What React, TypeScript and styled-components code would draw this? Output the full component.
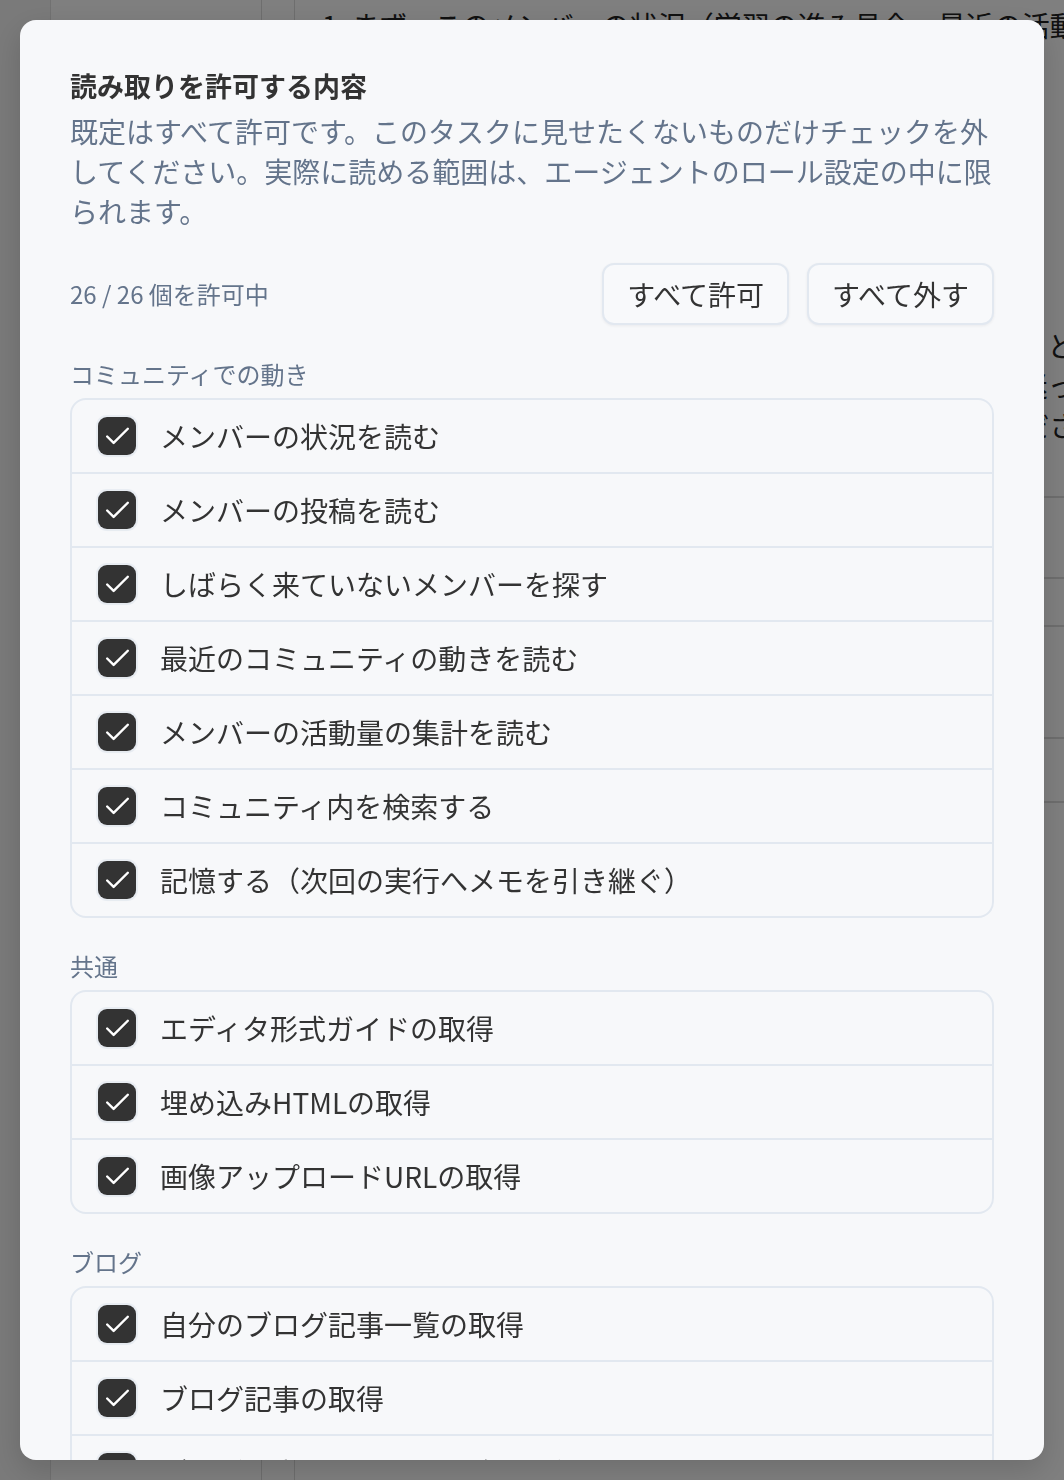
import React, { useState } from "react";
import styled, { createGlobalStyle } from "styled-components";

const GlobalStyle = createGlobalStyle`
  html, body {
    margin: 0;
    padding: 0;
  }
  body {
    font-family: "Noto Sans CJK JP", "Noto Sans", sans-serif;
    color: #333;
    background: #fff;
  }
  * {
    box-sizing: border-box;
  }
`;

/* ---------- page behind the dialog ---------- */

const Page = styled.div`
  display: grid;
  grid-template-columns: 51px 211px 33px 1fr;
  height: 1480px;
  background: #fff;
  overflow: hidden;
`;

const Rail = styled.aside`
  background: #f5f5f5;
  border-right: 1px solid #e2e2e2;
`;

const Sidebar = styled.nav`
  border-right: 1px solid #dcdcdc;
`;

const Gutter = styled.div`
  border-right: 1px solid #dcdcdc;
`;

const Main = styled.main`
  padding: 5px 0 0 27px;
  display: flex;
  flex-direction: column;
  font-size: 28px;
  line-height: 40px;
  color: #222;
  overflow: hidden;
`;

const Lead = styled.p`
  margin: 0;
  white-space: nowrap;
`;

const Paragraph = styled.p`
  margin: 0;
  width: 760px;
`;

const Spacer = styled.div<{ $h: number }>`
  flex: none;
  height: ${(p) => p.$h}px;
`;

const BgRow = styled.div<{ $h: number }>`
  flex: none;
  height: ${(p) => p.$h}px;
  border-bottom: 2px solid #dcdcdc;
  margin-right: -40px;
`;

const BgInput = styled.div`
  flex: none;
  margin-top: 695px;
  width: 306px;
  height: 60px;
  border: 2px solid #d8d8d8;
  border-radius: 14px;
`;

/* ---------- dialog ---------- */

const Overlay = styled.div`
  position: fixed;
  inset: 0;
  background: rgba(0, 0, 0, 0.5);
  display: flex;
  padding: 20px;
`;

const Dialog = styled.section`
  flex: 1;
  background: #f7f8fa;
  border-radius: 16px;
  overflow: hidden;
  box-shadow: 0 10px 30px rgba(0, 0, 0, 0.15);
  padding: 46px 50px;
`;

const Title = styled.h2`
  margin: 0;
  font-size: 27px;
  line-height: 40px;
  font-weight: 700;
  color: #333;
`;

const Description = styled.p`
  margin: 5px 0 0;
  font-size: 28px;
  line-height: 40px;
  color: #64748b;
`;

const Toolbar = styled.div`
  margin-top: 32px;
  padding-bottom: 1px;
  display: flex;
  align-items: flex-start;
  justify-content: space-between;
`;

const Count = styled.span`
  font-size: 24px;
  line-height: 62px;
  color: #64748b;
`;

const Actions = styled.div`
  display: flex;
  gap: 18px;
`;

const ActionButton = styled.button`
  height: 62px;
  padding: 0 23px;
  border: 2px solid #e2e8f0;
  border-radius: 12px;
  background: #f8f9fb;
  box-shadow: 0 1px 3px rgba(15, 23, 42, 0.06);
  font-family: inherit;
  font-size: 28px;
  color: #333;
  cursor: pointer;
`;

const Section = styled.div`
  margin-top: 31px;
`;

const SectionLabel = styled.div`
  font-size: 24px;
  line-height: 34px;
  color: #64748b;
  margin-bottom: 7px;
`;

const List = styled.div`
  border: 2px solid #e2e8f0;
  border-radius: 16px;
  overflow: hidden;
`;

const Row = styled.label`
  display: flex;
  align-items: center;
  gap: 24px;
  height: 72px;
  padding: 0 26px;
  font-size: 28px;
  color: #333;
  cursor: pointer;

  & + & {
    border-top: 2px solid #e2e8f0;
    height: 74px;
  }
`;

const Box = styled.span<{ $on: boolean }>`
  flex: none;
  width: 38px;
  height: 38px;
  border-radius: 9px;
  display: grid;
  place-items: center;
  background: ${(p) => (p.$on ? "#333" : "#fff")};
  border: ${(p) => (p.$on ? "none" : "2px solid #cbd5e1")};
  box-shadow: 0 0 0 2px rgba(226, 232, 240, 0.7), 0 1px 2px rgba(0, 0, 0, 0.08);
`;

const HiddenInput = styled.input`
  display: none;
`;

type Group = { label: string; items: string[] };

const groups: Group[] = [
  {
    label: "コミュニティでの動き",
    items: [
      "メンバーの状況を読む",
      "メンバーの投稿を読む",
      "しばらく来ていないメンバーを探す",
      "最近のコミュニティの動きを読む",
      "メンバーの活動量の集計を読む",
      "コミュニティ内を検索する",
      "記憶する（次回の実行へメモを引き継ぐ）",
    ],
  },
  {
    label: "共通",
    items: ["エディタ形式ガイドの取得", "埋め込みHTMLの取得", "画像アップロードURLの取得"],
  },
  {
    label: "ブログ",
    items: [
      "自分のブログ記事一覧の取得",
      "ブログ記事の取得",
      "ブログ記事のコメント一覧の取得",
      "ブログのタグ一覧の取得",
    ],
  },
  {
    label: "コース",
    items: [
      "コース一覧の取得",
      "コースの取得",
      "レッスンの取得",
      "受講者の進捗の取得",
      "課題の提出一覧の取得",
      "クイズ結果の取得",
      "修了者一覧の取得",
      "コースのお知らせの取得",
      "コースの質問一覧の取得",
      "コースのレビュー一覧の取得",
      "受講者一覧の取得",
      "講師のメモの取得",
    ],
  },
];

const total = groups.reduce((n, g) => n + g.items.length, 0);

const CheckMark = () => (
  <svg width="31" height="31" viewBox="0 0 24 24" fill="none" stroke="#fff" strokeWidth="1.9" strokeLinecap="round" strokeLinejoin="round">
    <path d="M20 6 9 17l-5-5" />
  </svg>
);

const App: React.FC = () => {
  const [checked, setChecked] = useState<Record<string, boolean>>(() => {
    const all: Record<string, boolean> = {};
    groups.forEach((g) => g.items.forEach((i) => (all[i] = true)));
    return all;
  });

  const allowed = Object.values(checked).filter(Boolean).length;

  const setAll = (value: boolean) => {
    const next: Record<string, boolean> = {};
    Object.keys(checked).forEach((k) => (next[k] = value));
    setChecked(next);
  };

  return (
    <>
      <GlobalStyle />
      <Page>
        <Rail />
        <Sidebar />
        <Gutter />
        <Main>
          <Lead>1. まず、このメンバーの状況（学習の進み具合、最近の活動量）を確認してください。</Lead>
          <Spacer $h={280} />
          <Paragraph>
            返信が必要な投稿がある場合は、内容を要約したうえで、どのように声をかけるとよいかを一緒に考えてください。迷ったときは、まず相手の状況を確かめることから始めてください。
          </Paragraph>
          <BgRow $h={13} />
          <BgRow $h={81} />
          <BgRow $h={48} />
          <BgRow $h={112} />
          <BgRow $h={64} />
          <BgInput />
        </Main>
      </Page>

      <Overlay>
        <Dialog>
          <Title>読み取りを許可する内容</Title>
          <Description>
            既定はすべて許可です。このタスクに見せたくないものだけチェックを外してください。実際に読める範囲は、エージェントのロール設定の中に限られます。
          </Description>

          <Toolbar>
            <Count>
              {allowed} / {total} 個を許可中
            </Count>
            <Actions>
              <ActionButton onClick={() => setAll(true)}>すべて許可</ActionButton>
              <ActionButton onClick={() => setAll(false)}>すべて外す</ActionButton>
            </Actions>
          </Toolbar>

          {groups.map((group) => (
            <Section key={group.label}>
              <SectionLabel>{group.label}</SectionLabel>
              <List>
                {group.items.map((item) => (
                  <Row key={item}>
                    <HiddenInput
                      type="checkbox"
                      checked={checked[item]}
                      onChange={() => setChecked({ ...checked, [item]: !checked[item] })}
                    />
                    <Box $on={checked[item]}>{checked[item] && <CheckMark />}</Box>
                    <span>{item}</span>
                  </Row>
                ))}
              </List>
            </Section>
          ))}
        </Dialog>
      </Overlay>
    </>
  );
};

export default App;
